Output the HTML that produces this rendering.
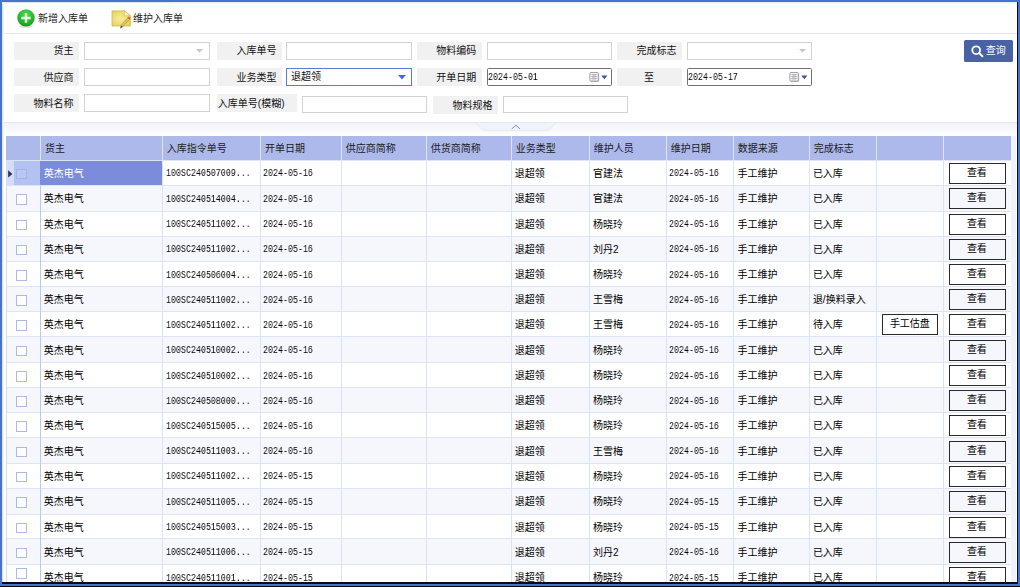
<!DOCTYPE html>
<html lang="zh-CN"><head><meta charset="utf-8"><title>入库单</title>
<style>
html,body{margin:0;padding:0}
body{position:relative;width:1020px;height:587px;overflow:hidden;background:#fff;font-family:"Liberation Sans",sans-serif;font-size:10px;color:#000}
div,span,svg{box-sizing:content-box}
.t,.ico,.a,.lbl,.inp,.th,.td,.tr,.btn,.cb{position:absolute}
.t{overflow:visible;display:block;font-family:"Liberation Sans","Noto Sans CJK SC",sans-serif;font-size:10px;line-height:11.2px;height:11.2px;white-space:nowrap;color:#000}
.ico{display:block;overflow:visible}
.a{font-family:"Liberation Mono",monospace;font-size:10.4px;line-height:10.4px;white-space:nowrap;transform:scaleX(.8);transform-origin:0 0;will-change:transform;color:#000}
.toolbar{position:absolute;left:2px;top:2px;width:1014.6px;height:31px;border-bottom:1px solid #e5e7ee;background:#fff}
.toolbar .t,.toolbar .ico{margin-left:-2px;margin-top:-2px}
.filter{position:absolute;left:0;top:34px;width:1016.6px;height:88px;background:#fff;border-bottom:1px solid #e3e7f0}
.filter>.lbl,.filter>.inp,.filter>.qbtn{margin-top:-34px}
.lbl{background:#f1f1f1}
.inp{border:1px solid #d3d3d3;background:#fff}
.inp.act{border-color:#5a7ad8}
.inp.date{border-color:#707070;border-radius:1.5px}
.qbtn{position:absolute;left:964px;top:40.3px;width:48.8px;height:21.5px;background:#4a62a4;border-radius:1.6px}
.band{position:absolute;left:2px;top:123px;width:1014.6px;height:13.2px;background:linear-gradient(#f3f5fb 0,#f6f8fc 50%,#fff 100%)}
.band .ico{margin-left:-2px}
.thead{position:absolute;background:#adb9eb;box-shadow:0 0.6px 0 #a3b0e6}
.th{top:0;height:100%;border-left:1px solid transparent}
.hl{position:absolute;top:0;width:1px;height:100%;background:#dde3f8}
.tbody{position:absolute;overflow:hidden;background:#fff}
.tr{left:0;width:100%;border-top:1px solid #dce5f6}
.tr.ev{background:#f5f7fd}
.td{top:0;height:100%;border-left:1px solid transparent}
.vl{position:absolute;top:0;width:1px;height:100%;background:#dbe4f6}
.vl.v0{background:#d3dcf4}
.vl.v2{background:#bcc8ed;top:26px}
.td.isel{background:#d4ddf7}
.td.csel{background:#b3c2f0}
.td.sel{background:#7b8dda;border-left-color:#7b8dda}
.cb{left:0.8px;width:8.8px;height:8.6px;border:1px solid #adb9e6;background:#fff}
.csel .cb{background:#b9c8f3;border-color:#a3b2e6}
.ev .cb{background:#fdfdff}
.btn{height:19px;border:1px solid #2a2a2a}
.vstrip{position:absolute;left:1011.4px;top:136px;width:4.4px;height:446px;background:#eef2fb}
.frame-l{position:absolute;left:0;top:0;width:2.1px;height:587px;background:#4673cd}
.frame-t{position:absolute;left:0;top:0;width:1020px;height:1.9px;background:#4673cd}
.frame-r{position:absolute;left:1018.1px;top:0;width:1.9px;height:587px;background:#4673cd}
.frame-b{position:absolute;left:0;top:583.9px;width:1020px;height:2.2px;background:#4673cd}
.blk-b{position:absolute;left:0;top:586px;width:1020px;height:1px;background:#05070d}
.dk-r{position:absolute;left:1016.6px;top:2px;width:1.5px;height:582px;background:#0a0d18}
.dk-b{position:absolute;left:2.1px;top:581.7px;width:1016px;height:2.2px;background:#0a0d18}
.gl{position:absolute;left:2.1px;top:2px;width:1.8px;height:580px;background:linear-gradient(90deg,#d9d9d9,#fff)}
.gt{position:absolute;left:2.1px;top:1.9px;width:1014.5px;height:1.7px;background:linear-gradient(#e6e9f1,#fdfdfe)}
.gt2{position:absolute;left:2.1px;top:1.9px;width:168px;height:1.4px;background:linear-gradient(#d9dfec,#eceff5)}
</style></head>
<body>
<div class="toolbar"><svg class="ico" style="left:16px;top:8px" width="20" height="21" viewBox="0 0 20 21">
<defs><radialGradient id="gg" cx="0.5" cy="0.3" r="0.75"><stop offset="0" stop-color="#4fdc4f"/><stop offset="0.6" stop-color="#27b52c"/><stop offset="1" stop-color="#16921c"/></radialGradient></defs>
<ellipse cx="10" cy="18.3" rx="7" ry="1.6" fill="#000" opacity="0.12"/>
<circle cx="10" cy="9.9" r="8.7" fill="url(#gg)"/>
<path d="M8.8 5.3h2.4v3.5h3.5v2.4h-3.5v3.5H8.8v-3.5H5.3V8.8h3.5z" fill="#f4fbf4" opacity="0.93"/>
</svg><span class="t" style="left:38px;top:13px;color:#222">新增入库单</span><svg class="ico" style="left:110px;top:9px" width="24" height="21" viewBox="0 0 24 21">
<defs><radialGradient id="ng" cx="0.45" cy="0.5" r="0.7"><stop offset="0" stop-color="#f6ec9c"/><stop offset="0.7" stop-color="#ead968"/><stop offset="1" stop-color="#dfcb52"/></radialGradient></defs>
<path d="M2 1.9h12.3l6.1 4.8V17H2z" fill="url(#ng)" stroke="#cdbb45" stroke-width="0.8"/>
<path d="M14.3 1.9v4.8h6.1z" fill="#f9f4c4" stroke="#cdbb45" stroke-width="0.6"/>
<path d="M18.7 9.5L11.5 17.7" stroke="#7d7040" stroke-width="2.7" opacity="0.55" fill="none"/>
<path d="M18.7 9.5L11.5 17.7" stroke="#e9c254" stroke-width="1.8" fill="none"/>
<path d="M18.4 9.85L19.75 8.3" stroke="#e9544c" stroke-width="2.3" fill="none"/>
<path d="M12.3 16.7l-1.45 0.3-0.75 2.5 2.3-1.2z" fill="#4a4434"/>
</svg><span class="t" style="left:133px;top:12.7px;color:#222">维护入库单</span></div>
<div class="filter"><div class="lbl" style="left:14.1px;top:42.1px;width:65px;height:17.6px"><span class="t" style="left:39.5px;top:3.4px;color:#111">货主</span></div><div class="inp " style="left:84.2px;top:42.1px;width:123.4px;height:15.6px"><svg class="ico" style="right:5.5px;top:6px" width="7" height="4" viewBox="0 0 7 4"><path d="M0 0h7L3.5 3.6z" fill="#c6c6c6"/></svg></div><div class="lbl" style="left:14.1px;top:68.2px;width:65px;height:17.5px"><span class="t" style="left:29.5px;top:3.35px;color:#111">供应商</span></div><div class="inp " style="left:84.2px;top:68.2px;width:123.4px;height:15.5px"></div><div class="lbl" style="left:14.1px;top:94.3px;width:65px;height:17.7px"><span class="t" style="left:19.5px;top:3.45px;color:#111">物料名称</span></div><div class="inp " style="left:84.2px;top:94.3px;width:123.4px;height:15.3px"></div><div class="lbl" style="left:217px;top:42.1px;width:64.9px;height:17.6px"><span class="t" style="left:19.4px;top:3.4px;color:#111">入库单号</span></div><div class="inp " style="left:286.2px;top:42.1px;width:123.6px;height:15.6px"></div><div class="lbl" style="left:217px;top:68.2px;width:64.9px;height:17.5px"><span class="t" style="left:19.4px;top:3.35px;color:#111">业务类型</span></div><div class="inp act" style="left:286.2px;top:68.2px;width:123.6px;height:15.5px"><span class="t" style="left:3.8px;top:1.6px;color:#111">退超领</span><svg class="ico" style="right:5px;top:6px" width="8" height="4.4" viewBox="0 0 8 4.4"><path d="M0 0h8L4 4.4z" fill="#4668cf"/></svg></div><div class="lbl" style="left:217px;top:94.3px;width:79.7px;height:17.4px"><span class="t" style="left:0.8px;top:3.3px;color:#111">入库单号(模糊)</span></div><div class="inp " style="left:301.9px;top:96.2px;width:123.5px;height:15.2px"></div><div class="lbl" style="left:416.5px;top:42.1px;width:65.3px;height:17.6px"><span class="t" style="left:19.8px;top:3.4px;color:#111">物料编码</span></div><div class="inp " style="left:486.5px;top:42.1px;width:123.3px;height:15.6px"></div><div class="lbl" style="left:416.5px;top:68.2px;width:65.3px;height:17.5px"><span class="t" style="left:19.8px;top:3.35px;color:#111">开单日期</span></div><div class="inp date" style="left:486.5px;top:68.2px;width:123.3px;height:15.5px"><span class="a" style="left:0.2px;top:3.2px">2024-05-01</span><svg class="ico" style="left:101px;top:2.5px" width="20" height="12" viewBox="0 0 20 12">
<rect x="1.6" y="1.2" width="8.6" height="8.8" rx="1.2" fill="#9a9a9a" opacity="0.55"/>
<rect x="0.9" y="0.5" width="8.4" height="8.6" rx="1.1" fill="#f3f3f6" stroke="#8a8a90" stroke-width="0.8"/>
<path d="M2.4 2.6h5.4M2.4 4.6h5.4M2.4 6.6h5.4M4.1 2.2v5.4M6.1 2.2v5.4" stroke="#a9a9b4" stroke-width="0.8" fill="none"/>
<path d="M12.2 3.6h6.2l-3.1 3.6z" fill="#3c5598"/>
</svg></div><div class="lbl" style="left:432.8px;top:96.3px;width:65.1px;height:17.3px"><span class="t" style="left:19.6px;top:3.25px;color:#111">物料规格</span></div><div class="inp " style="left:502.6px;top:96.3px;width:123.1px;height:15.1px"></div><div class="lbl" style="left:617.1px;top:42.1px;width:64.8px;height:17.6px"><span class="t" style="left:19.3px;top:3.4px;color:#111">完成标志</span></div><div class="inp " style="left:687px;top:42.1px;width:123.3px;height:15.6px"><svg class="ico" style="right:5.5px;top:6px" width="7" height="4" viewBox="0 0 7 4"><path d="M0 0h7L3.5 3.6z" fill="#c6c6c6"/></svg></div><div class="lbl" style="left:617.1px;top:68.2px;width:64.8px;height:17.5px"><span class="t" style="left:26.8px;top:3.35px;color:#111">至</span></div><div class="inp date" style="left:687px;top:68.2px;width:123.3px;height:15.5px"><span class="a" style="left:0.2px;top:3.2px">2024-05-17</span><svg class="ico" style="left:101px;top:2.5px" width="20" height="12" viewBox="0 0 20 12">
<rect x="1.6" y="1.2" width="8.6" height="8.8" rx="1.2" fill="#9a9a9a" opacity="0.55"/>
<rect x="0.9" y="0.5" width="8.4" height="8.6" rx="1.1" fill="#f3f3f6" stroke="#8a8a90" stroke-width="0.8"/>
<path d="M2.4 2.6h5.4M2.4 4.6h5.4M2.4 6.6h5.4M4.1 2.2v5.4M6.1 2.2v5.4" stroke="#a9a9b4" stroke-width="0.8" fill="none"/>
<path d="M12.2 3.6h6.2l-3.1 3.6z" fill="#3c5598"/>
</svg></div><div class="qbtn"><svg class="ico" style="left:6.5px;top:5px" width="13" height="13" viewBox="0 0 13 13">
<circle cx="5.2" cy="5.2" r="3.9" fill="none" stroke="#fff" stroke-width="1.8"/><path d="M8 8l3.4 3.3" stroke="#fff" stroke-width="2" stroke-linecap="round"/></svg><span class="t" style="left:21.7px;top:5px;color:#fff">查询</span></div></div>
<div class="band"><svg class="ico" style="left:470px;top:0" width="92" height="10" viewBox="0 0 92 10">
<path d="M5.5 0.3C9 0.5 9.5 7.6 17 7.6H75C82.500 7.6 83 0.5 86.5 0.3" fill="#f1f3fa" stroke="#dfe3ef" stroke-width="0.8"/>
<path d="M41.8 5.9l4.1-3.7 4.1 3.7" fill="none" stroke="#6484e0" stroke-width="0.9"/></svg></div>
<div class="thead" style="left:5.9px;top:136.2px;width:1005.1px;height:23.5px"><div class="th nb" style="left:0px;width:7.5px"></div><div class="th nb" style="left:8.5px;width:24.6px"></div><div class="th" style="left:34.1px;width:120.7px"><span class="t" style="left:4px;top:7px;color:#1a1a1a">货主</span></div><div class="th" style="left:155.8px;width:97.3px"><span class="t" style="left:4px;top:7px;color:#1a1a1a">入库指令单号</span></div><div class="th" style="left:254.1px;width:79.8px"><span class="t" style="left:4px;top:7px;color:#1a1a1a">开单日期</span></div><div class="th" style="left:334.9px;width:84px"><span class="t" style="left:4px;top:7px;color:#1a1a1a">供应商简称</span></div><div class="th" style="left:419.9px;width:84px"><span class="t" style="left:4px;top:7px;color:#1a1a1a">供货商简称</span></div><div class="th" style="left:504.9px;width:77px"><span class="t" style="left:4px;top:7px;color:#1a1a1a">业务类型</span></div><div class="th" style="left:582.9px;width:76px"><span class="t" style="left:4px;top:7px;color:#1a1a1a">维护人员</span></div><div class="th" style="left:659.9px;width:66px"><span class="t" style="left:4px;top:7px;color:#1a1a1a">维护日期</span></div><div class="th" style="left:726.9px;width:74.9px"><span class="t" style="left:4px;top:7px;color:#1a1a1a">数据来源</span></div><div class="th" style="left:802.8px;width:66.1px"><span class="t" style="left:4px;top:7px;color:#1a1a1a">完成标志</span></div><div class="th" style="left:869.9px;width:65.9px"></div><div class="th" style="left:936.8px;width:66.8px"></div><i class="hl" style="left:34.1px"></i><i class="hl" style="left:155.8px"></i><i class="hl" style="left:254.1px"></i><i class="hl" style="left:334.9px"></i><i class="hl" style="left:419.9px"></i><i class="hl" style="left:504.9px"></i><i class="hl" style="left:582.9px"></i><i class="hl" style="left:659.9px"></i><i class="hl" style="left:726.9px"></i><i class="hl" style="left:802.8px"></i><i class="hl" style="left:869.9px"></i><i class="hl" style="left:936.8px"></i></div>
<div class="tbody" style="left:5.9px;top:159.8px;width:1005.1px;height:422px"><div class="tr " style="top:0px;height:24px"><div class="td ind isel" style="left:0px;width:7.5px"><svg class="ico" style="left:1.1px;top:8.9px" width="5" height="8" viewBox="0 0 5 8"><path d="M0.2 0.2L4.4 3.9 0.2 7.6z" fill="#2c3350"/></svg></div><div class="td chk csel" style="left:8.5px;width:24.6px"><span class="cb" style="top:8px"></span></div><div class="td sel" style="left:34.1px;width:120.7px"><span class="t" style="left:2.8px;top:7.1px;color:#fff">英杰电气</span></div><div class="td " style="left:155.8px;width:97.3px"><span class="a" style="left:3.4px;top:7.6px">100SC240507009...</span></div><div class="td " style="left:254.1px;width:79.8px"><span class="a" style="left:1.6px;top:7.6px">2024-05-16</span></div><div class="td " style="left:334.9px;width:84px"></div><div class="td " style="left:419.9px;width:84px"></div><div class="td " style="left:504.9px;width:77px"><span class="t" style="left:3px;top:7.1px">退超领</span></div><div class="td " style="left:582.9px;width:76px"><span class="t" style="left:3.3px;top:7.1px">官建法</span></div><div class="td " style="left:659.9px;width:66px"><span class="a" style="left:2.5px;top:7.6px">2024-05-16</span></div><div class="td " style="left:726.9px;width:74.9px"><span class="t" style="left:3.7px;top:7.1px">手工维护</span></div><div class="td " style="left:802.8px;width:66.1px"><span class="t" style="left:3.2px;top:7.1px">已入库</span></div><div class="td " style="left:869.9px;width:65.9px"></div><div class="td " style="left:936.8px;width:66.8px"><div class="btn" style="left:5.3px;top:1.9px;width:54.8px"><span class="t" style="left:16.9px;top:3.2px">查看</span></div></div></div><div class="tr ev" style="top:25px;height:25.1px"><div class="td ind" style="left:0px;width:7.5px"></div><div class="td chk" style="left:8.5px;width:24.6px"><span class="cb" style="top:8.55px"></span></div><div class="td " style="left:34.1px;width:120.7px"><span class="t" style="left:2.8px;top:7.65px">英杰电气</span></div><div class="td " style="left:155.8px;width:97.3px"><span class="a" style="left:3.4px;top:8.15px">100SC240514004...</span></div><div class="td " style="left:254.1px;width:79.8px"><span class="a" style="left:1.6px;top:8.15px">2024-05-16</span></div><div class="td " style="left:334.9px;width:84px"></div><div class="td " style="left:419.9px;width:84px"></div><div class="td " style="left:504.9px;width:77px"><span class="t" style="left:3px;top:7.65px">退超领</span></div><div class="td " style="left:582.9px;width:76px"><span class="t" style="left:3.3px;top:7.65px">官建法</span></div><div class="td " style="left:659.9px;width:66px"><span class="a" style="left:2.5px;top:8.15px">2024-05-16</span></div><div class="td " style="left:726.9px;width:74.9px"><span class="t" style="left:3.7px;top:7.65px">手工维护</span></div><div class="td " style="left:802.8px;width:66.1px"><span class="t" style="left:3.2px;top:7.65px">已入库</span></div><div class="td " style="left:869.9px;width:65.9px"></div><div class="td " style="left:936.8px;width:66.8px"><div class="btn" style="left:5.3px;top:2.45px;width:54.8px"><span class="t" style="left:16.9px;top:3.2px">查看</span></div></div></div><div class="tr " style="top:51.1px;height:23.9px"><div class="td ind" style="left:0px;width:7.5px"></div><div class="td chk" style="left:8.5px;width:24.6px"><span class="cb" style="top:7.95px"></span></div><div class="td " style="left:34.1px;width:120.7px"><span class="t" style="left:2.8px;top:7.05px">英杰电气</span></div><div class="td " style="left:155.8px;width:97.3px"><span class="a" style="left:3.4px;top:7.55px">100SC240511002...</span></div><div class="td " style="left:254.1px;width:79.8px"><span class="a" style="left:1.6px;top:7.55px">2024-05-16</span></div><div class="td " style="left:334.9px;width:84px"></div><div class="td " style="left:419.9px;width:84px"></div><div class="td " style="left:504.9px;width:77px"><span class="t" style="left:3px;top:7.05px">退超领</span></div><div class="td " style="left:582.9px;width:76px"><span class="t" style="left:3.3px;top:7.05px">杨晓玲</span></div><div class="td " style="left:659.9px;width:66px"><span class="a" style="left:2.5px;top:7.55px">2024-05-16</span></div><div class="td " style="left:726.9px;width:74.9px"><span class="t" style="left:3.7px;top:7.05px">手工维护</span></div><div class="td " style="left:802.8px;width:66.1px"><span class="t" style="left:3.2px;top:7.05px">已入库</span></div><div class="td " style="left:869.9px;width:65.9px"></div><div class="td " style="left:936.8px;width:66.8px"><div class="btn" style="left:5.3px;top:1.85px;width:54.8px"><span class="t" style="left:16.9px;top:3.2px">查看</span></div></div></div><div class="tr ev" style="top:76px;height:24px"><div class="td ind" style="left:0px;width:7.5px"></div><div class="td chk" style="left:8.5px;width:24.6px"><span class="cb" style="top:8px"></span></div><div class="td " style="left:34.1px;width:120.7px"><span class="t" style="left:2.8px;top:7.1px">英杰电气</span></div><div class="td " style="left:155.8px;width:97.3px"><span class="a" style="left:3.4px;top:7.6px">100SC240511002...</span></div><div class="td " style="left:254.1px;width:79.8px"><span class="a" style="left:1.6px;top:7.6px">2024-05-16</span></div><div class="td " style="left:334.9px;width:84px"></div><div class="td " style="left:419.9px;width:84px"></div><div class="td " style="left:504.9px;width:77px"><span class="t" style="left:3px;top:7.1px">退超领</span></div><div class="td " style="left:582.9px;width:76px"><span class="t" style="left:3.3px;top:7.1px">刘丹2</span></div><div class="td " style="left:659.9px;width:66px"><span class="a" style="left:2.5px;top:7.6px">2024-05-16</span></div><div class="td " style="left:726.9px;width:74.9px"><span class="t" style="left:3.7px;top:7.1px">手工维护</span></div><div class="td " style="left:802.8px;width:66.1px"><span class="t" style="left:3.2px;top:7.1px">已入库</span></div><div class="td " style="left:869.9px;width:65.9px"></div><div class="td " style="left:936.8px;width:66.8px"><div class="btn" style="left:5.3px;top:1.9px;width:54.8px"><span class="t" style="left:16.9px;top:3.2px">查看</span></div></div></div><div class="tr " style="top:101px;height:24.7px"><div class="td ind" style="left:0px;width:7.5px"></div><div class="td chk" style="left:8.5px;width:24.6px"><span class="cb" style="top:8.35px"></span></div><div class="td " style="left:34.1px;width:120.7px"><span class="t" style="left:2.8px;top:7.45px">英杰电气</span></div><div class="td " style="left:155.8px;width:97.3px"><span class="a" style="left:3.4px;top:7.95px">100SC240506004...</span></div><div class="td " style="left:254.1px;width:79.8px"><span class="a" style="left:1.6px;top:7.95px">2024-05-16</span></div><div class="td " style="left:334.9px;width:84px"></div><div class="td " style="left:419.9px;width:84px"></div><div class="td " style="left:504.9px;width:77px"><span class="t" style="left:3px;top:7.45px">退超领</span></div><div class="td " style="left:582.9px;width:76px"><span class="t" style="left:3.3px;top:7.45px">杨晓玲</span></div><div class="td " style="left:659.9px;width:66px"><span class="a" style="left:2.5px;top:7.95px">2024-05-16</span></div><div class="td " style="left:726.9px;width:74.9px"><span class="t" style="left:3.7px;top:7.45px">手工维护</span></div><div class="td " style="left:802.8px;width:66.1px"><span class="t" style="left:3.2px;top:7.45px">已入库</span></div><div class="td " style="left:869.9px;width:65.9px"></div><div class="td " style="left:936.8px;width:66.8px"><div class="btn" style="left:5.3px;top:2.25px;width:54.8px"><span class="t" style="left:16.9px;top:3.2px">查看</span></div></div></div><div class="tr ev" style="top:126.7px;height:23.5px"><div class="td ind" style="left:0px;width:7.5px"></div><div class="td chk" style="left:8.5px;width:24.6px"><span class="cb" style="top:7.75px"></span></div><div class="td " style="left:34.1px;width:120.7px"><span class="t" style="left:2.8px;top:6.85px">英杰电气</span></div><div class="td " style="left:155.8px;width:97.3px"><span class="a" style="left:3.4px;top:7.35px">100SC240511002...</span></div><div class="td " style="left:254.1px;width:79.8px"><span class="a" style="left:1.6px;top:7.35px">2024-05-16</span></div><div class="td " style="left:334.9px;width:84px"></div><div class="td " style="left:419.9px;width:84px"></div><div class="td " style="left:504.9px;width:77px"><span class="t" style="left:3px;top:6.85px">退超领</span></div><div class="td " style="left:582.9px;width:76px"><span class="t" style="left:3.3px;top:6.85px">王雪梅</span></div><div class="td " style="left:659.9px;width:66px"><span class="a" style="left:2.5px;top:7.35px">2024-05-16</span></div><div class="td " style="left:726.9px;width:74.9px"><span class="t" style="left:3.7px;top:6.85px">手工维护</span></div><div class="td " style="left:802.8px;width:66.1px"><span class="t" style="left:3.2px;top:6.85px">退/换料录入</span></div><div class="td " style="left:869.9px;width:65.9px"></div><div class="td " style="left:936.8px;width:66.8px"><div class="btn" style="left:5.3px;top:1.65px;width:54.8px"><span class="t" style="left:16.9px;top:3.2px">查看</span></div></div></div><div class="tr " style="top:151.2px;height:24.5px"><div class="td ind" style="left:0px;width:7.5px"></div><div class="td chk" style="left:8.5px;width:24.6px"><span class="cb" style="top:8.25px"></span></div><div class="td " style="left:34.1px;width:120.7px"><span class="t" style="left:2.8px;top:7.35px">英杰电气</span></div><div class="td " style="left:155.8px;width:97.3px"><span class="a" style="left:3.4px;top:7.85px">100SC240511002...</span></div><div class="td " style="left:254.1px;width:79.8px"><span class="a" style="left:1.6px;top:7.85px">2024-05-16</span></div><div class="td " style="left:334.9px;width:84px"></div><div class="td " style="left:419.9px;width:84px"></div><div class="td " style="left:504.9px;width:77px"><span class="t" style="left:3px;top:7.35px">退超领</span></div><div class="td " style="left:582.9px;width:76px"><span class="t" style="left:3.3px;top:7.35px">王雪梅</span></div><div class="td " style="left:659.9px;width:66px"><span class="a" style="left:2.5px;top:7.85px">2024-05-16</span></div><div class="td " style="left:726.9px;width:74.9px"><span class="t" style="left:3.7px;top:7.35px">手工维护</span></div><div class="td " style="left:802.8px;width:66.1px"><span class="t" style="left:3.2px;top:7.35px">待入库</span></div><div class="td " style="left:869.9px;width:65.9px"><div class="btn" style="left:5.3px;top:2.15px;width:54.2px"><span class="t" style="left:6.8px;top:3.2px">手工估盘</span></div></div><div class="td " style="left:936.8px;width:66.8px"><div class="btn" style="left:5.3px;top:2.15px;width:54.8px"><span class="t" style="left:16.9px;top:3.2px">查看</span></div></div></div><div class="tr ev" style="top:176.7px;height:24.45px"><div class="td ind" style="left:0px;width:7.5px"></div><div class="td chk" style="left:8.5px;width:24.6px"><span class="cb" style="top:8.23px"></span></div><div class="td " style="left:34.1px;width:120.7px"><span class="t" style="left:2.8px;top:7.33px">英杰电气</span></div><div class="td " style="left:155.8px;width:97.3px"><span class="a" style="left:3.4px;top:7.82px">100SC240510002...</span></div><div class="td " style="left:254.1px;width:79.8px"><span class="a" style="left:1.6px;top:7.82px">2024-05-16</span></div><div class="td " style="left:334.9px;width:84px"></div><div class="td " style="left:419.9px;width:84px"></div><div class="td " style="left:504.9px;width:77px"><span class="t" style="left:3px;top:7.33px">退超领</span></div><div class="td " style="left:582.9px;width:76px"><span class="t" style="left:3.3px;top:7.33px">杨晓玲</span></div><div class="td " style="left:659.9px;width:66px"><span class="a" style="left:2.5px;top:7.82px">2024-05-16</span></div><div class="td " style="left:726.9px;width:74.9px"><span class="t" style="left:3.7px;top:7.33px">手工维护</span></div><div class="td " style="left:802.8px;width:66.1px"><span class="t" style="left:3.2px;top:7.33px">已入库</span></div><div class="td " style="left:869.9px;width:65.9px"></div><div class="td " style="left:936.8px;width:66.8px"><div class="btn" style="left:5.3px;top:2.12px;width:54.8px"><span class="t" style="left:16.9px;top:3.2px">查看</span></div></div></div><div class="tr " style="top:202.15px;height:24.05px"><div class="td ind" style="left:0px;width:7.5px"></div><div class="td chk" style="left:8.5px;width:24.6px"><span class="cb" style="top:8.03px"></span></div><div class="td " style="left:34.1px;width:120.7px"><span class="t" style="left:2.8px;top:7.13px">英杰电气</span></div><div class="td " style="left:155.8px;width:97.3px"><span class="a" style="left:3.4px;top:7.62px">100SC240510002...</span></div><div class="td " style="left:254.1px;width:79.8px"><span class="a" style="left:1.6px;top:7.62px">2024-05-16</span></div><div class="td " style="left:334.9px;width:84px"></div><div class="td " style="left:419.9px;width:84px"></div><div class="td " style="left:504.9px;width:77px"><span class="t" style="left:3px;top:7.13px">退超领</span></div><div class="td " style="left:582.9px;width:76px"><span class="t" style="left:3.3px;top:7.13px">杨晓玲</span></div><div class="td " style="left:659.9px;width:66px"><span class="a" style="left:2.5px;top:7.62px">2024-05-16</span></div><div class="td " style="left:726.9px;width:74.9px"><span class="t" style="left:3.7px;top:7.13px">手工维护</span></div><div class="td " style="left:802.8px;width:66.1px"><span class="t" style="left:3.2px;top:7.13px">已入库</span></div><div class="td " style="left:869.9px;width:65.9px"></div><div class="td " style="left:936.8px;width:66.8px"><div class="btn" style="left:5.3px;top:1.93px;width:54.8px"><span class="t" style="left:16.9px;top:3.2px">查看</span></div></div></div><div class="tr ev" style="top:227.2px;height:24px"><div class="td ind" style="left:0px;width:7.5px"></div><div class="td chk" style="left:8.5px;width:24.6px"><span class="cb" style="top:8px"></span></div><div class="td " style="left:34.1px;width:120.7px"><span class="t" style="left:2.8px;top:7.1px">英杰电气</span></div><div class="td " style="left:155.8px;width:97.3px"><span class="a" style="left:3.4px;top:7.6px">100SC240508000...</span></div><div class="td " style="left:254.1px;width:79.8px"><span class="a" style="left:1.6px;top:7.6px">2024-05-16</span></div><div class="td " style="left:334.9px;width:84px"></div><div class="td " style="left:419.9px;width:84px"></div><div class="td " style="left:504.9px;width:77px"><span class="t" style="left:3px;top:7.1px">退超领</span></div><div class="td " style="left:582.9px;width:76px"><span class="t" style="left:3.3px;top:7.1px">杨晓玲</span></div><div class="td " style="left:659.9px;width:66px"><span class="a" style="left:2.5px;top:7.6px">2024-05-16</span></div><div class="td " style="left:726.9px;width:74.9px"><span class="t" style="left:3.7px;top:7.1px">手工维护</span></div><div class="td " style="left:802.8px;width:66.1px"><span class="t" style="left:3.2px;top:7.1px">已入库</span></div><div class="td " style="left:869.9px;width:65.9px"></div><div class="td " style="left:936.8px;width:66.8px"><div class="btn" style="left:5.3px;top:1.9px;width:54.8px"><span class="t" style="left:16.9px;top:3.2px">查看</span></div></div></div><div class="tr " style="top:252.2px;height:24.5px"><div class="td ind" style="left:0px;width:7.5px"></div><div class="td chk" style="left:8.5px;width:24.6px"><span class="cb" style="top:8.25px"></span></div><div class="td " style="left:34.1px;width:120.7px"><span class="t" style="left:2.8px;top:7.35px">英杰电气</span></div><div class="td " style="left:155.8px;width:97.3px"><span class="a" style="left:3.4px;top:7.85px">100SC240515005...</span></div><div class="td " style="left:254.1px;width:79.8px"><span class="a" style="left:1.6px;top:7.85px">2024-05-16</span></div><div class="td " style="left:334.9px;width:84px"></div><div class="td " style="left:419.9px;width:84px"></div><div class="td " style="left:504.9px;width:77px"><span class="t" style="left:3px;top:7.35px">退超领</span></div><div class="td " style="left:582.9px;width:76px"><span class="t" style="left:3.3px;top:7.35px">杨晓玲</span></div><div class="td " style="left:659.9px;width:66px"><span class="a" style="left:2.5px;top:7.85px">2024-05-16</span></div><div class="td " style="left:726.9px;width:74.9px"><span class="t" style="left:3.7px;top:7.35px">手工维护</span></div><div class="td " style="left:802.8px;width:66.1px"><span class="t" style="left:3.2px;top:7.35px">已入库</span></div><div class="td " style="left:869.9px;width:65.9px"></div><div class="td " style="left:936.8px;width:66.8px"><div class="btn" style="left:5.3px;top:2.15px;width:54.8px"><span class="t" style="left:16.9px;top:3.2px">查看</span></div></div></div><div class="tr ev" style="top:277.7px;height:24.3px"><div class="td ind" style="left:0px;width:7.5px"></div><div class="td chk" style="left:8.5px;width:24.6px"><span class="cb" style="top:8.15px"></span></div><div class="td " style="left:34.1px;width:120.7px"><span class="t" style="left:2.8px;top:7.25px">英杰电气</span></div><div class="td " style="left:155.8px;width:97.3px"><span class="a" style="left:3.4px;top:7.75px">100SC240511003...</span></div><div class="td " style="left:254.1px;width:79.8px"><span class="a" style="left:1.6px;top:7.75px">2024-05-16</span></div><div class="td " style="left:334.9px;width:84px"></div><div class="td " style="left:419.9px;width:84px"></div><div class="td " style="left:504.9px;width:77px"><span class="t" style="left:3px;top:7.25px">退超领</span></div><div class="td " style="left:582.9px;width:76px"><span class="t" style="left:3.3px;top:7.25px">王雪梅</span></div><div class="td " style="left:659.9px;width:66px"><span class="a" style="left:2.5px;top:7.75px">2024-05-16</span></div><div class="td " style="left:726.9px;width:74.9px"><span class="t" style="left:3.7px;top:7.25px">手工维护</span></div><div class="td " style="left:802.8px;width:66.1px"><span class="t" style="left:3.2px;top:7.25px">已入库</span></div><div class="td " style="left:869.9px;width:65.9px"></div><div class="td " style="left:936.8px;width:66.8px"><div class="btn" style="left:5.3px;top:2.05px;width:54.8px"><span class="t" style="left:16.9px;top:3.2px">查看</span></div></div></div><div class="tr " style="top:303px;height:23.9px"><div class="td ind" style="left:0px;width:7.5px"></div><div class="td chk" style="left:8.5px;width:24.6px"><span class="cb" style="top:7.95px"></span></div><div class="td " style="left:34.1px;width:120.7px"><span class="t" style="left:2.8px;top:7.05px">英杰电气</span></div><div class="td " style="left:155.8px;width:97.3px"><span class="a" style="left:3.4px;top:7.55px">100SC240511002...</span></div><div class="td " style="left:254.1px;width:79.8px"><span class="a" style="left:1.6px;top:7.55px">2024-05-15</span></div><div class="td " style="left:334.9px;width:84px"></div><div class="td " style="left:419.9px;width:84px"></div><div class="td " style="left:504.9px;width:77px"><span class="t" style="left:3px;top:7.05px">退超领</span></div><div class="td " style="left:582.9px;width:76px"><span class="t" style="left:3.3px;top:7.05px">杨晓玲</span></div><div class="td " style="left:659.9px;width:66px"><span class="a" style="left:2.5px;top:7.55px">2024-05-16</span></div><div class="td " style="left:726.9px;width:74.9px"><span class="t" style="left:3.7px;top:7.05px">手工维护</span></div><div class="td " style="left:802.8px;width:66.1px"><span class="t" style="left:3.2px;top:7.05px">已入库</span></div><div class="td " style="left:869.9px;width:65.9px"></div><div class="td " style="left:936.8px;width:66.8px"><div class="btn" style="left:5.3px;top:1.85px;width:54.8px"><span class="t" style="left:16.9px;top:3.2px">查看</span></div></div></div><div class="tr ev" style="top:327.9px;height:25.3px"><div class="td ind" style="left:0px;width:7.5px"></div><div class="td chk" style="left:8.5px;width:24.6px"><span class="cb" style="top:8.65px"></span></div><div class="td " style="left:34.1px;width:120.7px"><span class="t" style="left:2.8px;top:7.75px">英杰电气</span></div><div class="td " style="left:155.8px;width:97.3px"><span class="a" style="left:3.4px;top:8.25px">100SC240511005...</span></div><div class="td " style="left:254.1px;width:79.8px"><span class="a" style="left:1.6px;top:8.25px">2024-05-15</span></div><div class="td " style="left:334.9px;width:84px"></div><div class="td " style="left:419.9px;width:84px"></div><div class="td " style="left:504.9px;width:77px"><span class="t" style="left:3px;top:7.75px">退超领</span></div><div class="td " style="left:582.9px;width:76px"><span class="t" style="left:3.3px;top:7.75px">杨晓玲</span></div><div class="td " style="left:659.9px;width:66px"><span class="a" style="left:2.5px;top:8.25px">2024-05-15</span></div><div class="td " style="left:726.9px;width:74.9px"><span class="t" style="left:3.7px;top:7.75px">手工维护</span></div><div class="td " style="left:802.8px;width:66.1px"><span class="t" style="left:3.2px;top:7.75px">已入库</span></div><div class="td " style="left:869.9px;width:65.9px"></div><div class="td " style="left:936.8px;width:66.8px"><div class="btn" style="left:5.3px;top:2.55px;width:54.8px"><span class="t" style="left:16.9px;top:3.2px">查看</span></div></div></div><div class="tr " style="top:354.2px;height:23.5px"><div class="td ind" style="left:0px;width:7.5px"></div><div class="td chk" style="left:8.5px;width:24.6px"><span class="cb" style="top:7.75px"></span></div><div class="td " style="left:34.1px;width:120.7px"><span class="t" style="left:2.8px;top:6.85px">英杰电气</span></div><div class="td " style="left:155.8px;width:97.3px"><span class="a" style="left:3.4px;top:7.35px">100SC240515003...</span></div><div class="td " style="left:254.1px;width:79.8px"><span class="a" style="left:1.6px;top:7.35px">2024-05-15</span></div><div class="td " style="left:334.9px;width:84px"></div><div class="td " style="left:419.9px;width:84px"></div><div class="td " style="left:504.9px;width:77px"><span class="t" style="left:3px;top:6.85px">退超领</span></div><div class="td " style="left:582.9px;width:76px"><span class="t" style="left:3.3px;top:6.85px">杨晓玲</span></div><div class="td " style="left:659.9px;width:66px"><span class="a" style="left:2.5px;top:7.35px">2024-05-15</span></div><div class="td " style="left:726.9px;width:74.9px"><span class="t" style="left:3.7px;top:6.85px">手工维护</span></div><div class="td " style="left:802.8px;width:66.1px"><span class="t" style="left:3.2px;top:6.85px">已入库</span></div><div class="td " style="left:869.9px;width:65.9px"></div><div class="td " style="left:936.8px;width:66.8px"><div class="btn" style="left:5.3px;top:1.65px;width:54.8px"><span class="t" style="left:16.9px;top:3.2px">查看</span></div></div></div><div class="tr ev" style="top:378.7px;height:24.5px"><div class="td ind" style="left:0px;width:7.5px"></div><div class="td chk" style="left:8.5px;width:24.6px"><span class="cb" style="top:8.25px"></span></div><div class="td " style="left:34.1px;width:120.7px"><span class="t" style="left:2.8px;top:7.35px">英杰电气</span></div><div class="td " style="left:155.8px;width:97.3px"><span class="a" style="left:3.4px;top:7.85px">100SC240511006...</span></div><div class="td " style="left:254.1px;width:79.8px"><span class="a" style="left:1.6px;top:7.85px">2024-05-15</span></div><div class="td " style="left:334.9px;width:84px"></div><div class="td " style="left:419.9px;width:84px"></div><div class="td " style="left:504.9px;width:77px"><span class="t" style="left:3px;top:7.35px">退超领</span></div><div class="td " style="left:582.9px;width:76px"><span class="t" style="left:3.3px;top:7.35px">刘丹2</span></div><div class="td " style="left:659.9px;width:66px"><span class="a" style="left:2.5px;top:7.85px">2024-05-16</span></div><div class="td " style="left:726.9px;width:74.9px"><span class="t" style="left:3.7px;top:7.35px">手工维护</span></div><div class="td " style="left:802.8px;width:66.1px"><span class="t" style="left:3.2px;top:7.35px">已入库</span></div><div class="td " style="left:869.9px;width:65.9px"></div><div class="td " style="left:936.8px;width:66.8px"><div class="btn" style="left:5.3px;top:2.15px;width:54.8px"><span class="t" style="left:16.9px;top:3.2px">查看</span></div></div></div><div class="tr " style="top:404.2px;height:24.5px"><div class="td ind" style="left:0px;width:7.5px"></div><div class="td chk" style="left:8.5px;width:24.6px"><span class="cb" style="top:3.4px"></span></div><div class="td " style="left:34.1px;width:120.7px"><span class="t" style="left:2.8px;top:7.35px">英杰电气</span></div><div class="td " style="left:155.8px;width:97.3px"><span class="a" style="left:3.4px;top:7.85px">100SC240511001...</span></div><div class="td " style="left:254.1px;width:79.8px"><span class="a" style="left:1.6px;top:7.85px">2024-05-15</span></div><div class="td " style="left:334.9px;width:84px"></div><div class="td " style="left:419.9px;width:84px"></div><div class="td " style="left:504.9px;width:77px"><span class="t" style="left:3px;top:7.35px">退超领</span></div><div class="td " style="left:582.9px;width:76px"><span class="t" style="left:3.3px;top:7.35px">杨晓玲</span></div><div class="td " style="left:659.9px;width:66px"><span class="a" style="left:2.5px;top:7.85px">2024-05-15</span></div><div class="td " style="left:726.9px;width:74.9px"><span class="t" style="left:3.7px;top:7.35px">手工维护</span></div><div class="td " style="left:802.8px;width:66.1px"><span class="t" style="left:3.2px;top:7.35px">已入库</span></div><div class="td " style="left:869.9px;width:65.9px"></div><div class="td " style="left:936.8px;width:66.8px"><div class="btn" style="left:5.3px;top:2.15px;width:54.8px"><span class="t" style="left:16.9px;top:3.2px">查看</span></div></div></div><i class="vl v0" style="left:0px"></i><i class="vl v2" style="left:34.1px"></i><i class="vl" style="left:155.8px"></i><i class="vl" style="left:254.1px"></i><i class="vl" style="left:334.9px"></i><i class="vl" style="left:419.9px"></i><i class="vl" style="left:504.9px"></i><i class="vl" style="left:582.9px"></i><i class="vl" style="left:659.9px"></i><i class="vl" style="left:726.9px"></i><i class="vl" style="left:802.8px"></i><i class="vl" style="left:869.9px"></i><i class="vl" style="left:936.8px"></i></div>
<div class="vstrip"></div>
<div class="frame-l"></div><div class="frame-t"></div><div class="frame-r"></div><div class="frame-b"></div>
<div class="dk-r"></div><div class="dk-b"></div><div class="blk-b"></div><div class="gl"></div><div class="gt"></div><div class="gt2"></div>
</body></html>
